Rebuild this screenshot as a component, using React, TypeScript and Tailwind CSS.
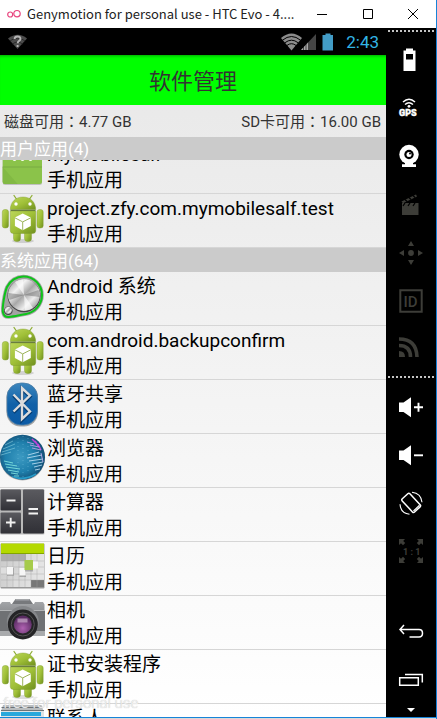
import type { ReactNode } from "react";

function AndroidIcon() {
  return (
    <svg viewBox="0 0 46 53" className="h-full w-full">
      <defs>
        <linearGradient id="robot" x1="0" y1="0" x2="1" y2="1">
          <stop offset="0" stopColor="#bcd65a" />
          <stop offset="0.5" stopColor="#a0c038" />
          <stop offset="1" stopColor="#70901f" />
        </linearGradient>
      </defs>
      <ellipse cx="23" cy="47" rx="11" ry="2" fill="#00000022" />
      <path d="M14 1.500l2.800 4M32 1.500l-2.800 4" stroke="#8fae35" strokeWidth="1.300" strokeLinecap="round" />
      <g fill="url(#robot)" stroke="#7b9a2a" strokeWidth="0.400">
        <rect x="13.500" y="34" width="7" height="13.500" rx="3" />
        <rect x="24.500" y="34" width="7" height="13.500" rx="3" />
        <rect x="2.300" y="15.500" width="6.200" height="18.500" rx="2.500" />
        <rect x="37" y="15.500" width="6.200" height="18.500" rx="2.500" />
        <path d="M10.300 17h25.400v19.500q0 3-3 3H13.300q-3 0-3-3z" />
        <path d="M10.300 15.500C10.500 8 15.500 3 23 3s12.500 5 12.700 12.500z" />
      </g>
      <path d="M10.500 16.300h25" stroke="#4d651b" strokeWidth="1" />
      <circle cx="16" cy="10" r="1.700" fill="#fff" />
      <circle cx="30" cy="10" r="1.700" fill="#fff" />
      <path d="M22.700 19.500l8.100 4v8.600l-8.100 4.200-7.800-4.200v-8.600z" fill="#fff" />
      <path d="M14.900 23.800l7.800 4.100 8.100-4.100M22.700 28v8" fill="none" stroke="#9db45a" strokeWidth="1" />
    </svg>
  );
}

function FolderIcon() {
  return (
    <svg viewBox="0 0 46 53" className="h-full w-full">
      <rect x="2.700" y="5.500" width="39.300" height="39.500" rx="2.500" fill="#00000030" />
      <rect x="2.700" y="4" width="39.300" height="40" rx="2.500" fill="#8bc34a" />
      <path d="M2.700 27l15 17H5.200q-2.500 0-2.500-2.500z" fill="#82b944" />
      <path d="M2.700 27H42" stroke="#79ab42" strokeWidth="1" />
      <path d="M12 8h20v10H12z" fill="#fff" />
      <circle cx="14.500" cy="19" r="2" fill="#fff" />
      <circle cx="22.500" cy="19" r="2" fill="#fff" />
      <circle cx="30.500" cy="19" r="2" fill="#fff" />
    </svg>
  );
}

function SystemIcon() {
  return (
    <svg viewBox="0 0 46 53" className="h-full w-full">
      <defs>
        <linearGradient id="metal" x1="0" y1="0" x2="1" y2="1">
          <stop offset="0" stopColor="#8c8c8c" />
          <stop offset="0.3" stopColor="#f2f2f2" />
          <stop offset="0.5" stopColor="#a8a8a8" />
          <stop offset="0.7" stopColor="#ededed" />
          <stop offset="1" stopColor="#6e6e6e" />
        </linearGradient>
      </defs>
      <path d="M3 40.500C2 36 4.500 21 7 15 10 8.500 16.500 4.500 23.500 4.500c10.500 0 18.500 8.500 18.500 18.500S34.500 40.500 26 42c-6 1-12 2.500-17 3-3 .3-5.300-1.500-6-4.500z" fill="none" stroke="#555" strokeWidth="3.600" opacity="0.500" />
      <path d="M3 40.500C2 36 4.500 21 7 15 10 8.500 16.500 4.500 23.500 4.500c10.500 0 18.500 8.500 18.500 18.500S34.500 40.500 26 42c-6 1-12 2.500-17 3-3 .3-5.300-1.500-6-4.500z" fill="#a3a3a3" stroke="#0ec41a" strokeWidth="2" />
      <circle cx="24" cy="23.700" r="16.500" fill="#454545" />
      <circle cx="24" cy="23" r="15.900" fill="url(#metal)" />
      <path d="M24 23L15 10a16 16 0 0 1 8-2.600zM24 23l9 13a16 16 0 0 1-8 2.600z" fill="#fff" opacity="0.600" />
      <path d="M24 23L38.500 18a16 16 0 0 1 1 7zM24 23L9.500 28a16 16 0 0 1-1-7z" fill="#666" opacity="0.450" />
      <circle cx="8.300" cy="38.800" r="4.300" fill="#444" />
      <circle cx="8.300" cy="38.300" r="3.500" fill="url(#metal)" />
    </svg>
  );
}

function BluetoothIcon() {
  return (
    <svg viewBox="0 0 46 53" className="h-full w-full">
      <defs>
        <linearGradient id="blue" x1="0" y1="0" x2="0" y2="1">
          <stop offset="0" stopColor="#3b86bd" />
          <stop offset="0.5" stopColor="#1161a8" />
          <stop offset="1" stopColor="#0b5aa5" />
        </linearGradient>
      </defs>
      <rect x="6.500" y="3.500" width="31.500" height="43" rx="14" fill="#00000055" />
      <rect x="7" y="3" width="30.500" height="42" rx="14" fill="url(#blue)" stroke="#4c7fa8" strokeWidth="0.800" />
      <g fill="none" strokeLinejoin="miter">
        <path d="M13.500 15.500L30 32.500l-8 7.500V9l8 7.500-16.500 16" stroke="#063d73" strokeWidth="3.400" />
        <path d="M13.500 14.500L30 31.500l-8 7.500V8l8 7.500-16.500 16" stroke="#dcdcdc" strokeWidth="2.400" />
      </g>
    </svg>
  );
}

function BrowserIcon() {
  return (
    <svg viewBox="0 0 46 53" className="h-full w-full">
      <defs>
        <radialGradient id="globe" cx="0.45" cy="0.5" r="0.55">
          <stop offset="0" stopColor="#3c9ac2" />
          <stop offset="0.6" stopColor="#1f7fac" />
          <stop offset="1" stopColor="#134d74" />
        </radialGradient>
        <clipPath id="ball">
          <circle cx="22.500" cy="23.200" r="22.300" />
        </clipPath>
      </defs>
      <circle cx="22.500" cy="24" r="22.500" fill="#00000044" />
      <circle cx="22.500" cy="23.200" r="22.500" fill="url(#globe)" />
      <g clipPath="url(#ball)" fill="none" strokeWidth="0.900">
        <path d="M5 11l8-4M3 15l12-5M2 18l13-4M1 21l10-3" stroke="#8ed3e2" opacity="0.650" />
        <path d="M4 27l9 2M5 30l12 2M6 33l14 2M8 36l11 2M11 39l7 1M14 42l5 0" stroke="#7fe0dc" />
        <path d="M28 21l11-3M27 24l15-3M29 27l14-2M32 30l11-2M34 33l8-2M35 36l5-1" stroke="#b3d9ee" />
        <path d="M32 5l4 4M35 7l4 6M38 10l3 6" stroke="#c042d8" strokeWidth="1.500" />
        <path d="M27 8l7 2M30 11l9 2M32 14l9 2M41 19l2 9" stroke="#b9a6e8" />
        <path d="M12 43q12 4 24-3" stroke="#2fb6e6" strokeWidth="2" opacity="0.700" />
        <path d="M18 4v36M23 2v42M28 4v36" stroke="#7cc5df" strokeDasharray="1 3" opacity="0.500" />
      </g>
    </svg>
  );
}

function CalculatorIcon() {
  return (
    <svg viewBox="0 0 46 53" className="h-full w-full">
      <defs>
        <linearGradient id="key" x1="0" y1="0" x2="0" y2="1">
          <stop offset="0" stopColor="#5a5a5f" />
          <stop offset="1" stopColor="#303036" />
        </linearGradient>
      </defs>
      <rect x="0" y="1" width="44.500" height="45.500" rx="1.500" fill="#b9b9b9" />
      <rect x="0.500" y="1.500" width="20.500" height="21" rx="1" fill="url(#key)" />
      <rect x="0.500" y="24.500" width="20.500" height="21" rx="1" fill="url(#key)" />
      <rect x="23" y="1.500" width="21" height="44" rx="1" fill="url(#key)" />
      <path d="M6.500 12.500h9M6 34.500h9.500M10.700 29.700v9.500M28.500 21h9.500M28.500 25.500h9.500" stroke="#f2f2f2" strokeWidth="1.900" />
    </svg>
  );
}

function CalendarIcon() {
  return (
    <svg viewBox="0 0 46 53" className="h-full w-full">
      <defs>
        <linearGradient id="grid" x1="0" y1="0" x2="1" y2="0.3">
          <stop offset="0" stopColor="#c9c9c9" />
          <stop offset="1" stopColor="#e4e4e4" />
        </linearGradient>
      </defs>
      <rect x="0.500" y="1.500" width="44" height="45" rx="1" fill="#999" />
      <rect x="1" y="1.500" width="43" height="43.500" fill="url(#grid)" />
      <path d="M1 12h25v7H1z" fill="#adadad" />
      <path d="M31 38h13v7H31z" fill="#777" />
      <path d="M13 38h6v7h-6zM1 25h6v7H1z" fill="#dedede" />
      <path d="M7 12v33M13 12v33M19 12v33M25 12v33M31 12v33M37 12v33M1 19h43M1 25h43M1 32h43M1 38h43" stroke="#a5a5a5" strokeWidth="0.400" />
      <rect x="1" y="1.500" width="43" height="10.500" fill="#b4d900" />
      <path d="M1 11.500h43" stroke="#83a500" strokeWidth="1" />
      <path d="M7 26h7v8H7z" fill="#777" opacity="0.400" />
      <path d="M7 25h6v7.500H7zM19.500 26h6v7.500h-6zM33 19.500h5v7h-5z" fill="#f6f6f6" />
      <path d="M19.500 33.500h6.500v1.500h-6.500zM25 28h8v1.500h-8z" fill="#777" opacity="0.500" />
      <rect x="24.500" y="18" width="8.500" height="10" fill="#a6cb4b" />
    </svg>
  );
}

function CameraIcon() {
  return (
    <svg viewBox="0 0 46 53" className="h-full w-full">
      <defs>
        <linearGradient id="body" x1="0" y1="0" x2="0" y2="1">
          <stop offset="0" stopColor="#a3a5a8" />
          <stop offset="1" stopColor="#5c5e61" />
        </linearGradient>
        <radialGradient id="lens" cx="0.5" cy="0.7" r="0.6">
          <stop offset="0" stopColor="#b062b2" />
          <stop offset="1" stopColor="#5a2c63" />
        </radialGradient>
      </defs>
      <path d="M12 8l3.500-5h14L33 8z" fill="#77797c" />
      <rect x="15.500" y="3" width="14" height="1.500" fill="#a4a6a9" />
      <path d="M2 6h8l1 2h23l1-2h8l1.500 2.500V40H0V8.500z" fill="url(#body)" />
      <path d="M0 14.500h45V35H0z" fill="#6f7174" />
      <path d="M0 35h45v5H0z" fill="#a9abad" />
      <path d="M0 14.500h45" stroke="#bfc1c3" strokeWidth="0.800" />
      <circle cx="22.800" cy="26" r="16" fill="#85878a" />
      <circle cx="22.800" cy="28.500" r="15" fill="#242426" />
      <circle cx="22.800" cy="28.500" r="11.500" fill="none" stroke="#555" strokeWidth="1" />
      <circle cx="22.800" cy="28.500" r="9" fill="url(#lens)" />
      <path d="M17.500 22.500h10v4h-10z" fill="#c7abc9" opacity="0.700" />
    </svg>
  );
}

function ContactsIcon() {
  return (
    <svg viewBox="0 0 46 53" className="h-full w-full">
      <path d="M3 1h38.500l2 6H1z" fill="#b9bdbf" />
      <path d="M1.500 3.500h41M1 6.500h43" stroke="#6d7478" strokeWidth="1" />
      <path d="M1 7h43v36H1z" fill="#dfe3e5" />
      <path d="M1 8h40v4H1z" fill="#28a8dc" />
    </svg>
  );
}

type App = { name: string; icon: ReactNode };

const userApps: App[] = [
  { name: "mymobilesalf", icon: <FolderIcon /> },
  { name: "project.zfy.com.mymobilesalf.test", icon: <AndroidIcon /> },
];

const systemApps: App[] = [
  { name: "Android 系统", icon: <SystemIcon /> },
  { name: "com.android.backupconfirm", icon: <AndroidIcon /> },
  { name: "蓝牙共享", icon: <BluetoothIcon /> },
  { name: "浏览器", icon: <BrowserIcon /> },
  { name: "计算器", icon: <CalculatorIcon /> },
  { name: "日历", icon: <CalendarIcon /> },
  { name: "相机", icon: <CameraIcon /> },
  { name: "证书安装程序", icon: <AndroidIcon /> },
  { name: "联系人", icon: <ContactsIcon /> },
];

function AppRow({ name, icon }: App) {
  return (
    <li className="flex h-[54px] border-b border-[#d6d6d6]">
      <div className="w-[46px] shrink-0">{icon}</div>
      <div className="min-w-0 pt-[2px] pl-px text-[19px] leading-[26px] whitespace-nowrap text-black">
        <p>{name}</p>
        <p>手机应用</p>
      </div>
    </li>
  );
}

function SectionTitle({ children }: { children: ReactNode }) {
  return (
    <h2 className="relative z-10 flex h-[23px] items-center bg-[#cbcbcb] pt-[2px] text-[17px] leading-[21px] text-white">
      {children}
    </h2>
  );
}

function Storage({ label, value }: { label: string; value: string }) {
  return (
    <span>
      {label}
      <span className="font-['Noto_Sans_CJK_TC',sans-serif]">：</span>
      {value}
    </span>
  );
}

function TitleBar() {
  return (
    <header className="flex h-7 shrink-0 items-center bg-white pl-[7px]">
      <svg viewBox="0 0 14 10" className="h-[10px] w-[14px] shrink-0" fill="none" stroke="#e8457f" strokeWidth="1.200">
        <circle cx="3.200" cy="5.500" r="2.500" />
        <circle cx="10" cy="4.700" r="3.200" />
      </svg>
      <h1 className="min-w-0 flex-1 truncate pl-[6px] font-['Noto_Sans_CJK_SC',sans-serif] text-[13px] leading-6 text-[#222]">
        Genymotion for personal use - HTC Evo - 4....
      </h1>
      <button aria-label="Minimize" className="flex h-full w-[46px] shrink-0 items-center justify-center">
        <svg viewBox="0 0 12 12" className="h-3 w-3" stroke="#000"><path d="M1 6.500h10" /></svg>
      </button>
      <button aria-label="Maximize" className="flex h-full w-[45px] shrink-0 items-center justify-center">
        <svg viewBox="0 0 12 12" className="h-3 w-3" stroke="#000" fill="none"><path d="M1.500 1.500h9v9h-9z" /></svg>
      </button>
      <button aria-label="Close" className="flex h-full w-[46px] shrink-0 items-center justify-center">
        <svg viewBox="0 0 12 12" className="h-3 w-3" stroke="#000"><path d="M1 1l10 10M11 1L1 11" /></svg>
      </button>
    </header>
  );
}

function StatusBar() {
  return (
    <div className="flex h-[27px] shrink-0 items-center bg-black pr-[7px] pl-2">
      <svg viewBox="0 0 20 16" className="h-4 w-5">
        <path d="M0 4.500Q10-3 19 4.500L9.500 15z" fill="#4c4c4c" />
        <path d="M2 7q7.500-6 15 0M4.500 10q5-4 10 0" fill="none" stroke="#222" strokeWidth="0.800" />
        <path d="M6.500 5q.3-2.500 3-2.500t3 2.200q0 1.500-1.700 2.400-1.100.6-1.100 2.200M9.600 11v2" fill="none" stroke="#b5b5b5" strokeWidth="1.900" />
      </svg>
      <div className="ml-auto flex items-center">
        <svg viewBox="0 0 36 18" className="h-[18px] w-9">
          <path d="M0 5Q10.500-4 21 5L10.500 17.500z" fill="#8c8c8c" />
          <path d="M1.500 7.200q9-7.400 18 0M3.800 9.800q6.700-5.200 13.400 0M6 12.400q4.500-3.400 9 0" fill="none" stroke="#000" strokeWidth="1" />
          <path d="M35 1v16H20z" fill="#454545" />
          <path d="M27 9.500V17h-7z" fill="#a5a5a5" />
          <path d="M22.500 13v4M25 11v6" stroke="#000" strokeWidth="0.600" />
        </svg>
        <svg viewBox="0 0 12 18" className="ml-[5px] h-[18px] w-3">
          <path d="M3.500 0.500h5v1.500h2.500v15.500H0.500V2h3z" fill="#429cc6" />
        </svg>
        <span className="ml-3 pt-px text-[17px] leading-[26px] text-[#33b5e5]">2:43</span>
      </div>
    </div>
  );
}

function Dots() {
  return (
    <svg className="h-[2px] w-full" aria-hidden="true">
      <line x1="0" y1="1" x2="100%" y2="1" stroke="#c4c4c4" strokeWidth="2" strokeDasharray="2 2" />
    </svg>
  );
}

function ToolButton({ label, dim, children }: { label: string; dim?: boolean; children: ReactNode }) {
  return (
    <button
      aria-label={label}
      className={`flex h-12 w-full shrink-0 items-center justify-center ${dim ? "text-[#3d3d38]" : "text-white"}`}
    >
      <svg viewBox="0 0 26 26" className="h-[26px] w-[26px]" fill="currentColor">
        {children}
      </svg>
    </button>
  );
}

function Toolbar() {
  return (
    <aside className="flex w-[50px] shrink-0 flex-col bg-black">
      <div className="h-2 px-[2px] pt-[2px]"><Dots /></div>
      <ToolButton label="Battery">
        <path d="M8 1.500h7V3.500h2.500v20.500H5.500V3.500H8z" />
        <path d="M8 7h7v5.500H8z" fill="#000" />
      </ToolButton>
      <ToolButton label="GPS">
        <path d="M5 7q6-5.500 12 0M7 9.500q4-3.500 8 0" fill="none" stroke="currentColor" strokeWidth="1.500" />
        <circle cx="11" cy="11.300" r="1.400" />
        <text x="1" y="20.500" fontSize="9" fontWeight="900" fontFamily="Roboto, sans-serif" stroke="currentColor" strokeWidth="0.400">GPS</text>
      </ToolButton>
      <ToolButton label="Camera">
        <circle cx="11" cy="11.500" r="9.700" />
        <circle cx="11" cy="11.500" r="4.700" fill="#000" />
        <circle cx="11" cy="11.500" r="2.500" />
        <circle cx="12" cy="10.500" r="1" fill="#000" />
        <path d="M7 19h8v2.200h3V24H4v-2.800h3z" />
      </ToolButton>
      <ToolButton label="Screencast" dim>
        <path d="M4 12h16.500v12H4z" />
        <path d="M3.500 10.500L18 3.500l1 2L5 12.300z" />
        <path d="M7 8.500l2 2M11 6.500l2 2M15 4.500l2 2M7 12l-2 3M12 12l-2 3M17 12l-2 3" stroke="#000" strokeWidth="1.300" />
      </ToolButton>
      <ToolButton label="Remote control" dim>
        <circle cx="13" cy="14" r="2.900" />
        <path d="M13 2l3 5h-6zM13 26l3-5h-6zM1 14l5-3v6zM25 14l-5-3v6z" />
      </ToolButton>
      <ToolButton label="Identifiers" dim>
        <path d="M2.300 3.300h21.400v21.400H2.300z" fill="none" stroke="currentColor" strokeWidth="2" />
        <text x="5.500" y="19.500" fontSize="15" fontWeight="500" fontFamily="Roboto, sans-serif">ID</text>
      </ToolButton>
      <ToolButton label="Network" dim>
        <path d="M1 4q17.500 0 18 18M1 10.500q11.500 0 11.500 11.500" fill="none" stroke="currentColor" strokeWidth="3.600" />
        <path d="M1 16q6 0 6 6H1z" />
      </ToolButton>
      <div className="h-[11px] px-[2px] pt-1"><Dots /></div>
      <ToolButton label="Volume up">
        <path d="M1 8.500h4.500L13 3.300v20L5.500 18H1z" />
        <path d="M16 13.300h9M20.500 8.800v9" stroke="currentColor" strokeWidth="1.900" />
      </ToolButton>
      <ToolButton label="Volume down">
        <path d="M1 8.500h4.500L13 3.300v20L5.500 18H1z" />
        <path d="M16 13.300h9" stroke="currentColor" strokeWidth="1.900" />
      </ToolButton>
      <ToolButton label="Rotate">
        <g fill="none" stroke="currentColor">
          <rect x="8" y="4" width="10.500" height="18" rx="1.500" strokeWidth="1.500" transform="rotate(-43 13 13)" />
          <path d="M15.500 21l6-5.700" strokeWidth="1.200" />
          <path d="M14 2.200q9 1 10 10M11.500 24.200q-9-1-9.500-10" strokeWidth="1.100" />
        </g>
      </ToolButton>
      <ToolButton label="Pixel perfect" dim>
        <path d="M1 1h6L5.200 3l2 2L5 7.200l-2-2L1 7zM25 1h-6l1.800 2-2 2L21 7.200l2-2L25 7zM1 25h6l-1.800-2 2-2L5 18.800l-2 2L1 19zM25 25h-6l1.800-2-2-2 2.200-2.200 2 2L25 19z" />
        <text x="5" y="16.500" fontSize="9" fontWeight="700" fontFamily="Roboto, sans-serif">1 : 1</text>
      </ToolButton>
      <div className="h-8 shrink-0" />
      <ToolButton label="Back">
        <path d="M6 7L2 11.500 6 16M2 11.500h19q3.500 0 3.500 3.700T21 19H11.500" fill="none" stroke="currentColor" strokeWidth="1.500" />
      </ToolButton>
      <ToolButton label="Recent apps">
        <path d="M1.700 11.700h18.600v7.600H1.700zM7 8.500h17.300v8" fill="none" stroke="currentColor" strokeWidth="1.500" />
      </ToolButton>
      <button aria-label="More" className="flex min-h-0 flex-1 items-center justify-center text-white">
        <svg viewBox="0 0 8 4" className="h-1 w-2" fill="currentColor"><path d="M0 0h8L4 4z" /></svg>
      </button>
    </aside>
  );
}

export default function App() {
  return (
    <div className="flex h-screen flex-col overflow-hidden border-r border-[#1683d8] bg-white font-[Roboto,'Noto_Sans_CJK_SC',sans-serif]">
      <TitleBar />
      <div className="flex min-h-0 flex-1">
        <main className="relative flex min-w-0 flex-1 flex-col overflow-hidden">
          <StatusBar />
          <div className="flex min-h-0 flex-1 flex-col bg-linear-to-b from-[#e8e8e8] to-white">
            <div className="flex h-[50px] shrink-0 items-center justify-center bg-[#00ff00] pt-[3px] text-[22px] text-[#333] shadow-[inset_0_3px_3px_-2px_#00a800]">
              软件管理
            </div>
            <div className="flex h-8 shrink-0 items-center justify-between pt-[2px] pr-[5px] pl-1 text-[15px] text-[#333]">
              <Storage label="磁盘可用" value="4.77 GB" />
              <Storage label="SD卡可用" value="16.00 GB" />
            </div>
            <div className="min-h-0 flex-1 overflow-hidden">
              <section>
                <SectionTitle>用户应用(4)</SectionTitle>
                {/* list is scrolled a little under its sticky heading */}
                <ul className="-mt-5">
                  {userApps.map((app) => <AppRow key={app.name} {...app} />)}
                </ul>
              </section>
              <section className="border-t border-[#cbcbcb]">
                <SectionTitle>系统应用(64)</SectionTitle>
                <ul>
                  {systemApps.map((app) => <AppRow key={app.name} {...app} />)}
                </ul>
              </section>
            </div>
          </div>
          <p className="pointer-events-none absolute bottom-1 left-[3px] z-20 text-[15px] leading-5 font-light text-[#f2f2f2] [text-shadow:0_0_1px_#b5b5b5]">
            free for personal use
          </p>
        </main>
        <Toolbar />
      </div>
      <footer className="h-[2px] shrink-0 border-t border-[#1683d8] bg-[#d8d8d8]" />
    </div>
  );
}
